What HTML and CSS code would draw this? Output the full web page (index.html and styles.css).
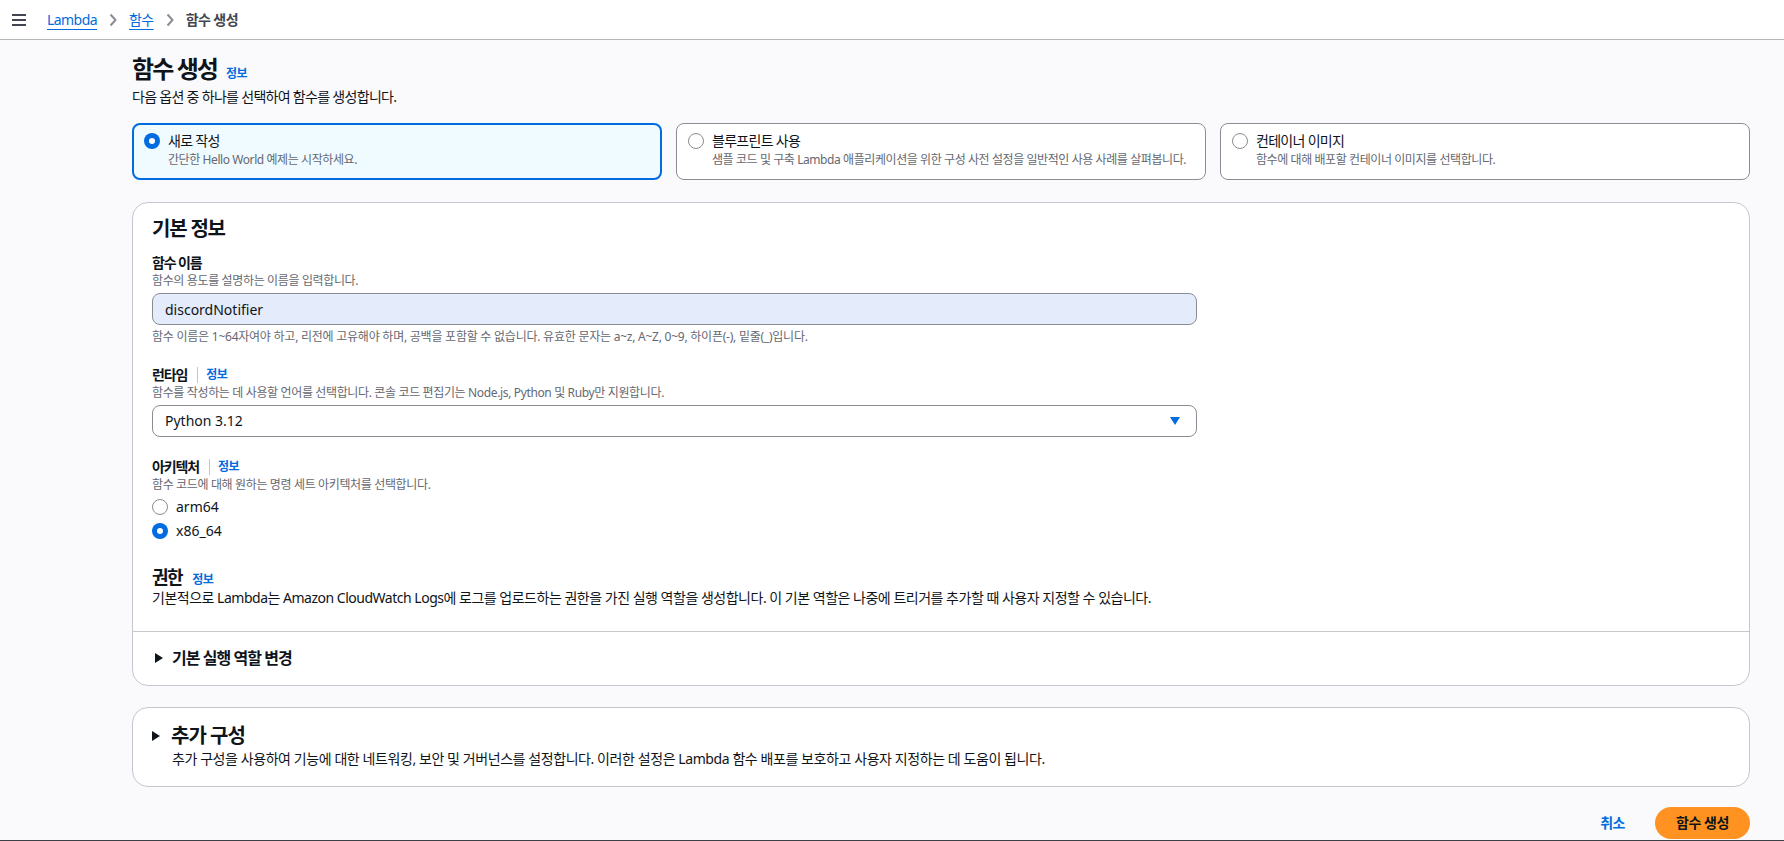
FILE: index.html
```html
<!DOCTYPE html>
<html lang="ko">
<head>
<meta charset="utf-8">
<title>함수 생성 - Lambda</title>
<link rel="stylesheet" href="styles.css">
</head>
<body>
<header class="topbar">
  <button class="menu-btn" aria-label="메뉴">
    <svg width="14" height="12" viewBox="0 0 14 12"><path d="M0 1h14M0 6h14M0 11h14" stroke="#424650" stroke-width="2" fill="none"/></svg>
  </button>
  <nav class="breadcrumbs">
    <a class="crumb-link">Lambda</a>
    <svg class="chev" width="8" height="14" viewBox="0 0 8 14"><path d="M1.5 1.5l5 5.5-5 5.5" stroke="#8c8c94" stroke-width="2" fill="none" stroke-linejoin="round"/></svg>
    <a class="crumb-link">함수</a>
    <svg class="chev" width="8" height="14" viewBox="0 0 8 14"><path d="M1.5 1.5l5 5.5-5 5.5" stroke="#8c8c94" stroke-width="2" fill="none" stroke-linejoin="round"/></svg>
    <span class="crumb-current">함수 생성</span>
  </nav>
</header>

<main class="page">
  <div class="page-head">
    <h1 class="page-title">함수 생성 <a class="info-link">정보</a></h1>
    <p class="page-desc">다음 옵션 중 하나를 선택하여 함수를 생성합니다.</p>
  </div>

  <div class="tiles">
    <label class="tile selected">
      <span class="radio checked"></span>
      <span class="tile-text">
        <span class="tile-title">새로 작성</span>
        <span class="tile-desc">간단한 Hello World 예제는 시작하세요.</span>
      </span>
    </label>
    <label class="tile">
      <span class="radio"></span>
      <span class="tile-text">
        <span class="tile-title">블루프린트 사용</span>
        <span class="tile-desc">샘플 코드 및 구축 Lambda 애플리케이션을 위한 구성 사전 설정을 일반적인 사용 사례를 살펴봅니다.</span>
      </span>
    </label>
    <label class="tile">
      <span class="radio"></span>
      <span class="tile-text">
        <span class="tile-title">컨테이너 이미지</span>
        <span class="tile-desc">함수에 대해 배포할 컨테이너 이미지를 선택합니다.</span>
      </span>
    </label>
  </div>

  <section class="panel">
    <div class="panel-body">
      <h2 class="panel-title">기본 정보</h2>

      <div class="field">
        <div class="field-label">함수 이름</div>
        <div class="field-desc">함수의 용도를 설명하는 이름을 입력합니다.</div>
        <input class="text-input" type="text" value="discordNotifier">
        <div class="field-constraint">함수 이름은 1~64자여야 하고, 리전에 고유해야 하며, 공백을 포함할 수 없습니다. 유효한 문자는 a~z, A~Z, 0~9, 하이픈(-), 밑줄(_)입니다.</div>
      </div>

      <div class="field">
        <div class="field-label">런타임<span class="label-sep"></span><a class="info-link">정보</a></div>
        <div class="field-desc">함수를 작성하는 데 사용할 언어를 선택합니다. 콘솔 코드 편집기는 Node.js, Python 및 Ruby만 지원합니다.</div>
        <div class="select">
          <span class="select-value">Python 3.12</span>
          <svg class="select-caret" width="10" height="8" viewBox="0 0 10 8"><path d="M0 0h10L5 8z" fill="#006ce0"/></svg>
        </div>
      </div>

      <div class="field">
        <div class="field-label">아키텍처<span class="label-sep"></span><a class="info-link">정보</a></div>
        <div class="field-desc">함수 코드에 대해 원하는 명령 세트 아키텍처를 선택합니다.</div>
        <div class="radio-group">
          <label class="radio-row"><span class="radio"></span><span class="radio-label">arm64</span></label>
          <label class="radio-row"><span class="radio checked"></span><span class="radio-label">x86_64</span></label>
        </div>
      </div>

      <h3 class="sub-title">권한 <a class="info-link">정보</a></h3>
      <p class="sub-desc">기본적으로 Lambda는 Amazon CloudWatch Logs에 로그를 업로드하는 권한을 가진 실행 역할을 생성합니다. 이 기본 역할은 나중에 트리거를 추가할 때 사용자 지정할 수 있습니다.</p>
    </div>
    <div class="expander">
      <svg class="caret" width="8" height="10" viewBox="0 0 8 10"><path d="M0 0l8 5-8 5z" fill="#0f141a"/></svg>
      <span class="expander-title">기본 실행 역할 변경</span>
    </div>
  </section>

  <section class="panel panel-extra">
    <div class="extra-head">
      <svg class="caret" width="8" height="10" viewBox="0 0 8 10"><path d="M0 0l8 5-8 5z" fill="#0f141a"/></svg>
      <span class="extra-title">추가 구성</span>
    </div>
    <p class="extra-desc">추가 구성을 사용하여 기능에 대한 네트워킹, 보안 및 거버넌스를 설정합니다. 이러한 설정은 Lambda 함수 배포를 보호하고 사용자 지정하는 데 도움이 됩니다.</p>
  </section>

  <div class="actions">
    <button class="btn-link">취소</button>
    <button class="btn-primary">함수 생성</button>
  </div>
</main>
<footer class="footer"></footer>
</body>
</html>
```

FILE: styles.css
```css
* { box-sizing: border-box; }
html, body { margin: 0; padding: 0; }
body {
  font-family: "Noto Sans", "Noto Sans CJK KR", sans-serif;
  font-size: 14px;
  line-height: 20px;
  color: #0f141a;
  background: #fafafc;
  letter-spacing: -0.04em;
  height: 841px;
  overflow: hidden;
}
p, h1, h2, h3 { margin: 0; }

/* top bar */
.topbar {
  height: 40px;
  background: #ffffff;
  border-bottom: 1px solid #b4b4bb;
  display: flex;
  align-items: center;
  padding-left: 12px;
}
.menu-btn {
  width: 14px; height: 12px;
  padding: 0; border: 0; background: none;
  display: flex;
  margin-right: 21px;
}
.breadcrumbs { display: flex; align-items: center; gap: 12px; }
.crumb-link {
  color: #006ce0;
  text-decoration: underline;
  text-underline-offset: 4px;
  text-decoration-thickness: 1px;
}
.crumb-current { color: #424650; font-weight: 700; }

/* page */
.page { padding: 14px 34px 0 132px; }
.page-title {
  font-size: 24px;
  line-height: 30px;
  font-weight: 700;
  display: flex;
  align-items: baseline;
  gap: 9px;
  letter-spacing: -0.08em;
}
.info-link {
  font-size: 12px;
  line-height: 16px;
  font-weight: 700;
  color: #006ce0;
  letter-spacing: -0.04em;
}
.page-desc { margin-top: 3px; letter-spacing: -0.05em; }

/* tiles */
.tiles {
  margin-top: 16px;
  display: grid;
  grid-template-columns: repeat(3, 1fr);
  gap: 14px;
}
.tile {
  display: flex;
  align-items: flex-start;
  gap: 8px;
  height: 57px;
  padding: 7px 11px 9px 11px;
  border: 1px solid #8c8c94;
  border-radius: 8px;
  background: #ffffff;
  min-width: 0;
}
.tile.selected {
  padding: 6px 10px 8px 10px;
  border: 2px solid #006ce0;
  background: #f0fbff;
}
.tile .radio { margin-top: 2px; }
.tile-text { display: flex; flex-direction: column; min-width: 0; }
.tile-title { line-height: 20px; letter-spacing: -0.05em; }
.tile-desc {
  margin-top: 1px;
  font-size: 12px;
  line-height: 16px;
  color: #656871;
  letter-spacing: -0.035em;
  white-space: nowrap;
}

/* radio */
.radio {
  position: relative;
  flex: none;
  width: 16px; height: 16px;
  border-radius: 50%;
  border: 1.5px solid #8c8c94;
  background: #ffffff;
}
.radio.checked { border: 0; background: #006ce0; }
.radio.checked::after {
  content: "";
  position: absolute;
  left: 5px; top: 5px;
  width: 6px; height: 6px;
  border-radius: 50%;
  background: #ffffff;
}

/* panel */
.panel {
  margin-top: 22px;
  background: #ffffff;
  border: 1px solid #c6c6cd;
  border-radius: 16px;
}
.panel-body { padding: 14px 19px 23px; }
.panel-title {
  font-size: 20px;
  line-height: 24px;
  font-weight: 700;
  letter-spacing: -0.06em;
}
.field { margin-top: 20px; }
.panel-title + .field { margin-top: 12px; }
.field-label {
  display: flex;
  align-items: center;
  font-weight: 700;
  line-height: 20px;
  letter-spacing: -0.08em;
}
.label-sep {
  width: 1px; height: 16px;
  background: #c6c6cd;
  margin: 0 8px 0 10px;
}
.field-desc, .field-constraint {
  font-size: 12px;
  line-height: 16px;
  color: #656871;
  letter-spacing: -0.03em;
}
.field-constraint { margin-top: 4px; letter-spacing: -0.02em; }
.text-input {
  display: block;
  margin-top: 4px;
  width: 1045px;
  height: 32px;
  padding: 0 12px;
  border: 1px solid #8c8c94;
  border-radius: 8px;
  background: #e4ebfa;
  font: inherit;
  letter-spacing: 0;
  color: #0f141a;
  outline: none;
}
.select {
  margin-top: 4px;
  width: 1045px;
  height: 32px;
  padding: 0 16px 0 12px;
  border: 1px solid #8c8c94;
  border-radius: 8px;
  background: #ffffff;
  display: flex;
  align-items: center;
  justify-content: space-between;
}
.select-value { letter-spacing: 0; }

.radio-group { margin-top: 4px; display: flex; flex-direction: column; gap: 4px; }
.radio-row { display: flex; align-items: center; gap: 8px; height: 20px; }
.radio-label { letter-spacing: 0; }

.sub-title {
  margin-top: 25px;
  font-size: 18px;
  line-height: 22px;
  font-weight: 700;
  display: flex;
  align-items: baseline;
  gap: 10px;
  letter-spacing: -0.08em;
}
.sub-desc { line-height: 20px; letter-spacing: -0.035em; }

.expander {
  border-top: 1px solid #c6c6cd;
  padding: 16px 20px 17px 22px;
  display: flex;
  align-items: center;
  gap: 9px;
}
.expander-title {
  font-size: 16px;
  font-weight: 700;
  line-height: 20px;
  letter-spacing: -0.06em;
}

.panel-extra { margin-top: 21px; padding: 18px 19px 17px; }
.extra-head { display: flex; align-items: center; gap: 11px; }
.extra-title {
  font-size: 20px;
  line-height: 20px;
  font-weight: 700;
  letter-spacing: -0.05em;
}
.extra-desc { margin: 3px 0 0 20px; line-height: 20px; letter-spacing: -0.03em; }

/* actions */
.actions {
  margin-top: 20px;
  display: flex;
  justify-content: flex-end;
  align-items: center;
  gap: 30px;
}
.btn-link {
  border: 0; background: none; padding: 0;
  font: inherit;
  font-weight: 700;
  color: #006ce0;
  letter-spacing: -0.04em;
}
.btn-primary {
  height: 32px;
  padding: 0 21px;
  border: 0;
  border-radius: 16px;
  background: #ff9220;
  font: inherit;
  font-weight: 700;
  color: #0f141a;
  letter-spacing: -0.03em;
}
.footer {
  margin-top: 1px;
  height: 40px;
  background: #3b3f46;
}
```
